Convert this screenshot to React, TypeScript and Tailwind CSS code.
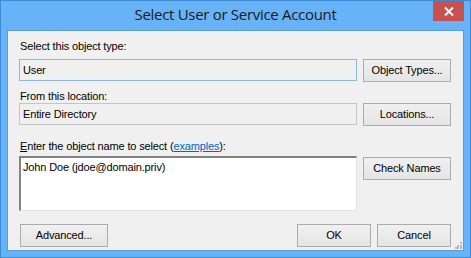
import React from "react";

const btn =
  "h-[23px] flex items-center justify-center border border-[#acacac] bg-[linear-gradient(#f0f0f0,#e5e5e5)] text-[11px] text-black";

export default function App() {
  return (
    <div className="w-[471px] h-[258px] bg-[#68b3f7] border border-[#3d8ad6] flex flex-col relative overflow-hidden">
      <div className="h-[29px] flex items-center justify-center pb-[2px]">
        <span className="text-[15px] text-[#1a1a1a] font-['Open_Sans',sans-serif] tracking-[-0.3px]">
          Select User or Service Account
        </span>
      </div>
      <div className="absolute top-0 right-[6px] w-[31px] h-[20px] bg-[#c75050] flex items-center justify-center">
        <svg width="10" height="9" viewBox="0 0 10 9">
          <path d="M1 0.5 L9 8.5 M9 0.5 L1 8.5" stroke="white" strokeWidth="2" />
        </svg>
      </div>
      <div className="flex-1 mx-[6px] mb-[6px] border border-[#5a9bd6] bg-[#f0f0f0] pl-[11px] pr-[12px] pt-[9px] flex flex-col font-['Liberation_Sans',Arial,sans-serif] text-[11px] text-black leading-[13px] tracking-[-0.15px] relative">
        <div className="pl-[1px]">Select this object type:</div>
        <div className="flex mt-[6px] gap-[6px]">
          <div className="w-[338px] h-[22px] border border-[#8fb7e0] flex items-center pl-[3px]">User</div>
          <div className={btn + " w-[88px]"}>Object Types...</div>
        </div>
        <div className="pl-[1px] mt-[8px]">From this location:</div>
        <div className="flex mt-[0px] gap-[6px]">
          <div className="w-[338px] h-[22px] border border-[#c4c4c4] flex items-center pl-[3px]">Entire Directory</div>
          <div className={btn + " w-[88px]"}>Locations...</div>
        </div>
        <div className="pl-[1px] mt-[14px]">
          <span className="underline">E</span>nter the object name to select (
          <span className="text-[#0066cc] underline">examples</span>):
        </div>
        <div className="flex mt-[3px] gap-[6px] items-start">
          <div className="w-[338px] h-[55px] bg-white border-t-2 border-l-2 border-t-[#838383] border-l-[#838383] border-r border-b border-r-[#e3e3e3] border-b-[#e3e3e3] pl-[2px] pt-[3px]">
            John Doe (jdoe@domain.priv)
          </div>
          <div className={btn + " w-[88px] mt-[1px]"}>Check Names</div>
        </div>
        <div className="flex mt-[13px] items-center">
          <div className={btn + " w-[88px] ml-[1px]"}>Advanced...</div>
          <div className="flex-1" />
          <div className={btn + " w-[74px] border-[#3399ff]"}>OK</div>
          <div className={btn + " w-[74px] ml-[6px]"}>Cancel</div>
        </div>
        <svg className="absolute right-[1px] bottom-[1px]" width="7" height="7" viewBox="0 0 7 7">
          <rect x="5" y="0" width="2" height="2" fill="#b8b8b8" />
          <rect x="2" y="3" width="2" height="2" fill="#b8b8b8" />
          <rect x="5" y="3" width="2" height="2" fill="#b8b8b8" />
          <rect x="0" y="5" width="2" height="2" fill="#b8b8b8" />
          <rect x="2" y="5" width="2" height="2" fill="#b8b8b8" />
          <rect x="5" y="5" width="2" height="2" fill="#b8b8b8" />
        </svg>
      </div>
    </div>
  );
}
